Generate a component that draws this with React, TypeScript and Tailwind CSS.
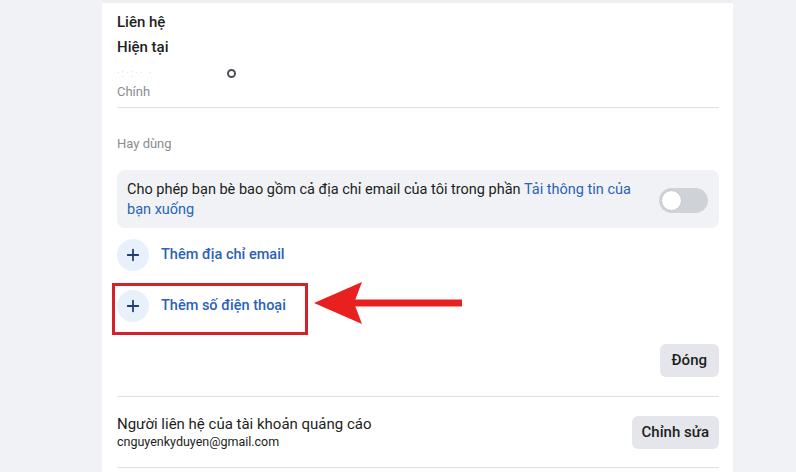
import { Plus } from "lucide-react";

const font = { fontFamily: 'Roboto, "Noto Sans", sans-serif' };

function AddRow({ label, boxed }: { label: string; boxed?: boolean }) {
  return (
    <div className="relative flex h-[51px] items-center">
      <div className="flex h-8 w-8 items-center justify-center rounded-full bg-[#e7f0fb]">
        <Plus className="h-[18px] w-[18px] text-[#1d3f78]" strokeWidth={2.4} />
      </div>
      <span className="ml-[12px] text-[14.5px] font-medium text-[#2a62b8]">{label}</span>
      {boxed && (
        <div className="pointer-events-none absolute left-[-5px] top-[3px] h-[52px] w-[196px] border-[3px] border-[#d3222a]" />
      )}
    </div>
  );
}

export default function App() {
  return (
    <div className="flex h-[472px] w-[796px] overflow-hidden bg-[#f0f2f5]" style={font}>
      <div className="w-[102px] shrink-0 bg-[#f0f2f5]" />
      <div className="w-[631px] shrink-0 border-t-[3px] border-[#eceef1] bg-white pl-[15px] pr-[14px]">
        <div className="mt-[9px] text-[15px] font-medium leading-5 text-[#1c1e21]">Liên hệ</div>
        <div className="mt-[5px] text-[15px] font-medium leading-5 text-[#1c1e21]">Hiện tại</div>
        <div className="mt-[6px] flex h-5 items-center">
          <span className="text-[10px] tracking-[2px] text-[#dadce0] blur-[0.6px]">·:·:·· ·</span>
          <span className="ml-[74px] block h-[9px] w-[9px] rounded-full border-[2px] border-[#4b4f56]" />
        </div>
        <div className="mt-[1px] text-[13px] leading-4 text-[#8a8d91]">Chính</div>
        <div className="mt-[7px] h-px bg-[#dcdfe3]" />
        <div className="mt-[28px] text-[13px] leading-4 text-[#8a8d91]">Hay dùng</div>
        <div className="mt-[18px] flex h-[58px] items-start justify-between rounded-lg bg-[#f0f2f5] pl-[10px] pr-[11px] pt-[10px]">
          <p className="w-[515px] text-[14.5px] leading-5 text-[#1c1e21]">
            Cho phép bạn bè bao gồm cả địa chỉ email của tôi trong phần{" "}
            <span className="text-[#2a62b8]">Tải thông tin của bạn xuống</span>
          </p>
          <div className="mt-[8px] flex h-[25px] w-[49px] items-center rounded-full bg-[#cfd2d6] px-[2px]">
            <div className="h-[21px] w-[21px] rounded-full border border-[#c4c6ca] bg-white" />
          </div>
        </div>
        <div className="mt-[1px]">
          <AddRow label="Thêm địa chỉ email" />
          <AddRow label="Thêm số điện thoại" boxed />
        </div>
        <div className="mt-[13px] flex justify-end">
          <button className="h-[33px] rounded-md bg-[#e4e6eb] px-[12px] text-[15px] font-medium text-[#1c1e21]">
            Đóng
          </button>
        </div>
        <div className="mt-[19px] h-px bg-[#dcdfe3]" />
        <div className="flex h-[70px] items-center justify-between">
          <div>
            <div className="text-[15px] leading-5 text-[#1c1e21]">Người liên hệ của tài khoản quảng cáo</div>
            <div className="text-[12.5px] leading-4 text-[#1c1e21]">cnguyenkyduyen@gmail.com</div>
          </div>
          <button className="h-[33px] rounded-md bg-[#e4e6eb] px-[10px] text-[15px] font-medium text-[#1c1e21]">
            Chỉnh sửa
          </button>
        </div>
        <div className="h-px bg-[#dcdfe3]" />
      </div>
      <div className="flex-1 bg-[#f0f2f5]" />
      <svg className="pointer-events-none absolute left-[312px] top-[280px]" width="152" height="46" viewBox="0 0 152 46">
        <polygon points="2,23 50,2 42,23 50,44" fill="#e8201f" />
        <rect x="42" y="19.5" width="108" height="7" fill="#e8201f" />
      </svg>
    </div>
  );
}
